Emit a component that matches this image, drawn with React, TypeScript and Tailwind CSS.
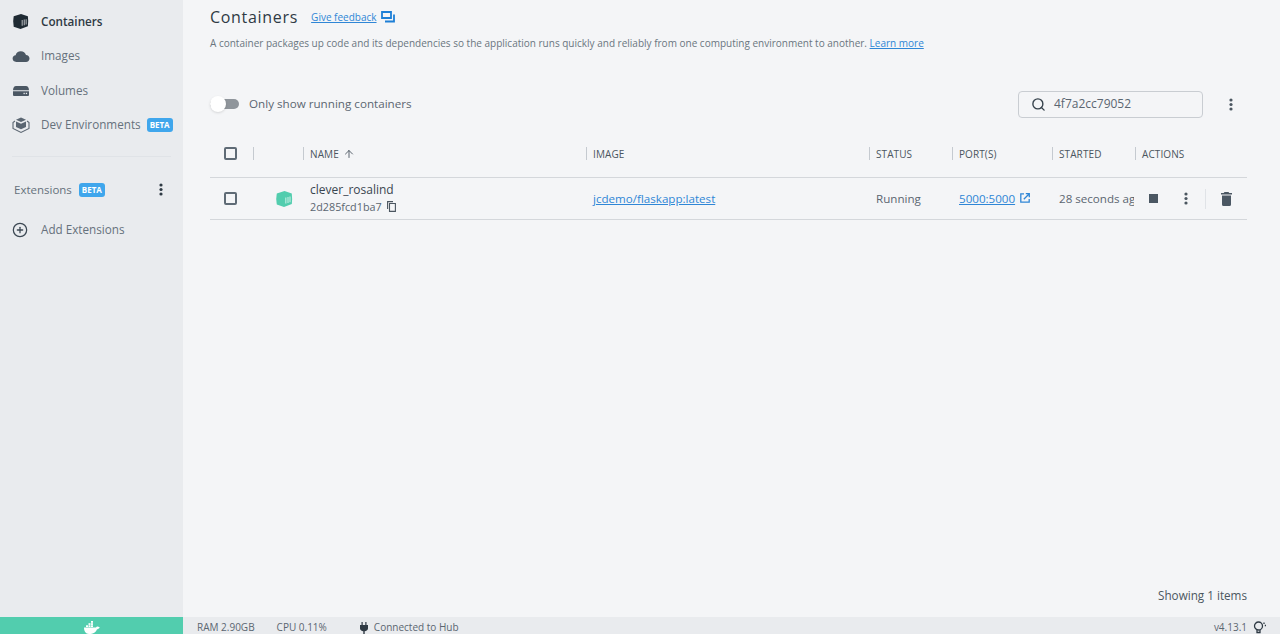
import React from "react";
import { ArrowUp, Search, CirclePlus } from "lucide-react";

const Cube = ({ color, size = 18 }: { color: string; size?: number }) => (
  <svg width={size} height={size} viewBox="0 0 18 18" fill="none">
    <path d="M9.500 1 L16.800 3.500 Q17.500 9 16.800 14 L9 17 L1.800 14.500 Q.600 9 1.800 3.500 Z" fill={color} />
    <path d="M10.800 13.500V7.500M13 13V7M15 12.300V6.500" stroke="#fff" strokeOpacity="0.6" strokeWidth="1.200" />
  </svg>
);

const Cloud = () => (
  <svg width="18" height="18" viewBox="0 0 18 18"><path d="M4.300 15C2 15 .6 13.400.6 11.600c0-1.800 1.300-3.100 3-3.300C4.200 5.900 6.200 4.300 8.800 4.300c2.500 0 4.500 1.500 5.200 3.800 2 .2 3.500 1.600 3.500 3.500 0 1.900-1.500 3.400-3.500 3.400Z" fill="#4b5763" /></svg>
);

const Volume = () => (
  <svg width="18" height="18" viewBox="0 0 18 18"><path d="M1 8.300 C1 5.500 2.500 4 4 4 H14 C15.500 4 17 5.500 17 8.300 Z" fill="#4b5763" /><path d="M1 9.200 H17 V13 A1 1 0 0 1 16 14 H2 A1 1 0 0 1 1 13 Z" fill="#4b5763" /><rect x="11.500" y="10.800" width="1.300" height="1.300" fill="#e9ebee" /><rect x="13.800" y="10.800" width="1.300" height="1.300" fill="#e9ebee" /></svg>
);

const DevEnv = () => (
  <svg width="18" height="18" viewBox="0 0 18 18" fill="none"><path d="M9 1.500 14 3.800 9 6 4 3.800Z" fill="#5b6672" /><path d="M4 5.500 9 7.800 14 5.500V11L9 13.300 4 11Z" fill="#5b6672" /><path d="M3 5 1 6.500V12.500L9 16.500 17 12.500V6.500L15 5" stroke="#5b6672" strokeWidth="1.100" /></svg>
);

const Kebab = ({ className, color }: { className?: string; color: string }) => (
  <svg className={className} width="4" height="13" viewBox="0 0 4 13" fill={color}><circle cx="2" cy="2" r="1.600" /><circle cx="2" cy="6.500" r="1.600" /><circle cx="2" cy="11" r="1.600" /></svg>
);

const Beta = () => (
  <span className="flex h-[14px] w-[26px] items-center justify-center rounded-[3px] bg-[#3fa6ec] text-[8px] font-bold leading-none text-white">BETA</span>
);

const NavItem = ({ icon, label, active, beta }: { icon: React.ReactNode; label: string; active?: boolean; beta?: boolean }) => (
  <div className="flex h-[34.500px] items-center pl-[12px]">
    <span className="flex w-[29px] shrink-0 items-center">{icon}</span>
    <span className={`whitespace-nowrap text-[11.700px] ${active ? "font-semibold text-[#2f3a44]" : "text-[#66717c]"}`}>{label}</span>
    {beta && <span className="ml-[6px]"><Beta /></span>}
  </div>
);

const Checkbox = () => <span className="block h-[13px] w-[13px] rounded-[2px] border-2 border-[#5f6b76]" />;

const HeadCell = ({ label, className, children }: { label?: string; className: string; children?: React.ReactNode }) => (
  <div className={`flex h-[13px] items-center gap-[4px] border-l border-[#c5cad0] pl-[6px] text-[10px] font-medium leading-none tracking-[0.1px] text-[#4b5660] ${className}`}>
    {label}
    {children}
  </div>
);

export default function App() {
  return (
    <div className="flex h-[634px] w-[1280px] flex-col overflow-hidden bg-[#f4f5f7] font-['Open_Sans',sans-serif]">
      <div className="flex min-h-0 flex-1">
        <aside className="w-[183px] shrink-0 bg-[#e9ebee] pt-[4.500px]">
          <NavItem active label="Containers" icon={<Cube color="#1f2a33" size={17} />} />
          <NavItem label="Images" icon={<Cloud />} />
          <NavItem label="Volumes" icon={<Volume />} />
          <NavItem label="Dev Environments" beta icon={<DevEnv />} />
          <div className="mx-[12px] mt-[13px] h-px bg-[#e0e3e7]" />
          <div className="mt-[16px] flex h-[34px] items-center pl-[14px] pr-[20px]">
            <span className="text-[11.500px] text-[#66717c]">Extensions</span>
            <span className="ml-[7px]"><Beta /></span>
            <Kebab className="ml-auto" color="#2f3a44" />
          </div>
          <div className="mt-[6px] flex h-[34px] items-center pl-[12px]">
            <span className="flex w-[29px] shrink-0"><CirclePlus size={16} strokeWidth={1.900} className="text-[#3c4853]" /></span>
            <span className="text-[11.700px] text-[#66717c]">Add Extensions</span>
          </div>
        </aside>

        <main className="flex min-w-0 flex-1 flex-col pl-[27px] pr-[33px]">
          <div className="flex h-[34px] items-center">
            <h1 className="text-[16px] font-medium tracking-[0.7px] text-[#2f3a44]">Containers</h1>
            <a className="ml-[13px] text-[10px] text-[#2f86d6] underline">Give feedback</a>
            <svg className="ml-[4px]" width="14" height="12" viewBox="0 0 14 12" fill="none" stroke="#1d7fd6" strokeWidth="1.800"><path d="M1 1H10V7H1Z" /><path d="M13 3.500V10.500H4" /></svg>
          </div>
          <p className="mt-[1px] h-[16px] whitespace-nowrap text-[10px] leading-[16px] text-[#6a7580]">
            A container packages up code and its dependencies so the application runs quickly and reliably from one computing environment to another. <a className="text-[#2f86d6] underline">Learn more</a>
          </p>

          <div className="mt-[39px] flex h-[28px] items-center">
            <div className="relative h-[10px] w-[29px] rounded-full bg-[#8f959b]">
              <span className="absolute left-0 top-[-3px] h-[16px] w-[16px] rounded-full bg-white shadow-sm" />
            </div>
            <span className="ml-[10px] text-[11.650px] text-[#5b6671]">Only show running containers</span>
            <div className="ml-auto flex h-[27px] w-[185px] items-center rounded-[4px] border border-[#c9cdd2] pl-[12px]">
              <Search size={15} strokeWidth={2.200} className="text-[#36424c]" />
              <span className="ml-[8px] text-[12px] text-[#5b6671]">4f7a2cc79052</span>
            </div>
            <Kebab className="ml-[26px] mr-[14px]" color="#4b5660" />
          </div>

          <div className="mt-[13px] flex h-[47px] items-center border-b border-[#d4d7db] pb-[1px]">
            <div className="w-[43px] pl-[14px]"><Checkbox /></div>
            <HeadCell className="w-[50px]" />
            <HeadCell className="w-[283px]" label="NAME"><ArrowUp size={12} strokeWidth={1.800} /></HeadCell>
            <HeadCell className="w-[283px]" label="IMAGE" />
            <HeadCell className="w-[83px]" label="STATUS" />
            <HeadCell className="w-[100px]" label="PORT(S)" />
            <HeadCell className="w-[83px]" label="STARTED" />
            <HeadCell className="w-[112px]" label="ACTIONS" />
          </div>

          <div className="flex h-[42px] items-center border-b border-[#d4d7db]">
            <div className="w-[43px] pl-[14px]"><Checkbox /></div>
            <div className="flex w-[57px] items-center pl-[22px]"><Cube color="#52cdae" /></div>
            <div className="w-[283px]">
              <div className="text-[12px] font-medium leading-[16px] text-[#3a4650]">clever_rosalind</div>
              <div className="flex items-center gap-[5px] text-[10.800px] leading-[17px] text-[#5b6671]">
                2d285fcd1ba7
                <svg width="9" height="11" viewBox="0 0 9 11" fill="none" stroke="#4b5660" strokeWidth="1.100"><path d="M.6 8V.6H6" /><path d="M2.500 2.500H8.400V10.400H2.500Z" /></svg>
              </div>
            </div>
            <div className="w-[283px] text-[11.600px] text-[#2f86d6] underline">jcdemo/flaskapp:latest</div>
            <div className="w-[83px] text-[11.600px] text-[#5b6671]">Running</div>
            <div className="flex w-[100px] items-center gap-[5px] text-[11.600px] text-[#2f86d6]">
              <span className="underline">5000:5000</span>
              <svg width="10" height="10" viewBox="0 0 10 10" fill="none" stroke="#2f86d6" strokeWidth="1.300"><path d="M4 .8H.8V9.200H9.200V6" /><path d="M3.800 6.200 9 1M5.800.7H9.300V4.200" /></svg>
            </div>
            <div className="w-[75px] overflow-hidden whitespace-nowrap text-[11.600px] text-[#5b6671]">28 seconds ago</div>
            <div className="flex flex-1 items-center">
              <span className="ml-[15px] block h-[9px] w-[9px] bg-[#4b5763]" />
              <Kebab className="ml-[26px]" color="#4b5660" />
              <div className="ml-[17px] h-[20px] w-px bg-[#e0e3e7]" />
              <svg className="ml-[15px]" width="11" height="14" viewBox="0 0 11 14" fill="#4b5763"><path d="M3.500 0H7.500L8.300 1H11V2.500H0V1H2.700Z" /><path d="M1 3.500H10V12.500A1.500 1.500 0 0 1 8.500 14H2.500A1.500 1.500 0 0 1 1 12.500Z" /></svg>
            </div>
          </div>

          <div className="mt-auto flex h-[30px] items-start justify-end text-[11.700px] text-[#4b5660]">Showing 1 items</div>
        </main>
      </div>

      <footer className="flex h-[17px] shrink-0 items-center overflow-hidden bg-[#e9ebee] pt-[4px] text-[10px] text-[#5b6671]">
        <div className="-mt-[4px] flex h-[17px] w-[183px] shrink-0 items-center justify-center bg-[#52cdae] pt-[4px]">
          <svg width="17" height="13" viewBox="0 0 17 13" fill="#fff"><path d="M1 6.500H13C13.300 5.500 14.500 5.200 15.500 5.700 15.700 6 16.500 6 16.800 6.200 16 7.800 14.800 8.200 14 8.200 13 11 10.500 13 6 13 2.500 13 1 10 1 6.500Z" /><rect x="3" y="4.300" width="2" height="1.700" /><rect x="5.500" y="4.300" width="2" height="1.700" /><rect x="8" y="4.300" width="2" height="1.700" /><rect x="5.500" y="2.200" width="2" height="1.700" /><rect x="8" y="2.200" width="2" height="1.700" /><rect x="8" y="0" width="2" height="1.800" /></svg>
        </div>
        <span className="ml-[14px]">RAM 2.90GB</span>
        <span className="ml-[22px]">CPU 0.11%</span>
        <svg className="ml-[32px]" width="10" height="12" viewBox="0 0 10 12" fill="#2f3a44"><path d="M2.500 0h1.200v3h2.600V0h1.200v3H9v3.500C9 8 7.500 9 5.700 9.200V12H4.300V9.200C2.500 9 1 8 1 6.500V3h1.500Z" /></svg>
        <span className="ml-[5px]">Connected to Hub</span>
        <span className="ml-auto">v4.13.1</span>
        <svg className="ml-[6px] mr-[13px]" width="14" height="13" viewBox="0 0 14 13" fill="none" stroke="#2f3a44" strokeWidth="1.300"><circle cx="5.500" cy="5" r="4" /><path d="M4 9V11.500H7V9" /><path d="M11 1.500V3M13 4.500H11.800" /></svg>
      </footer>
    </div>
  );
}
